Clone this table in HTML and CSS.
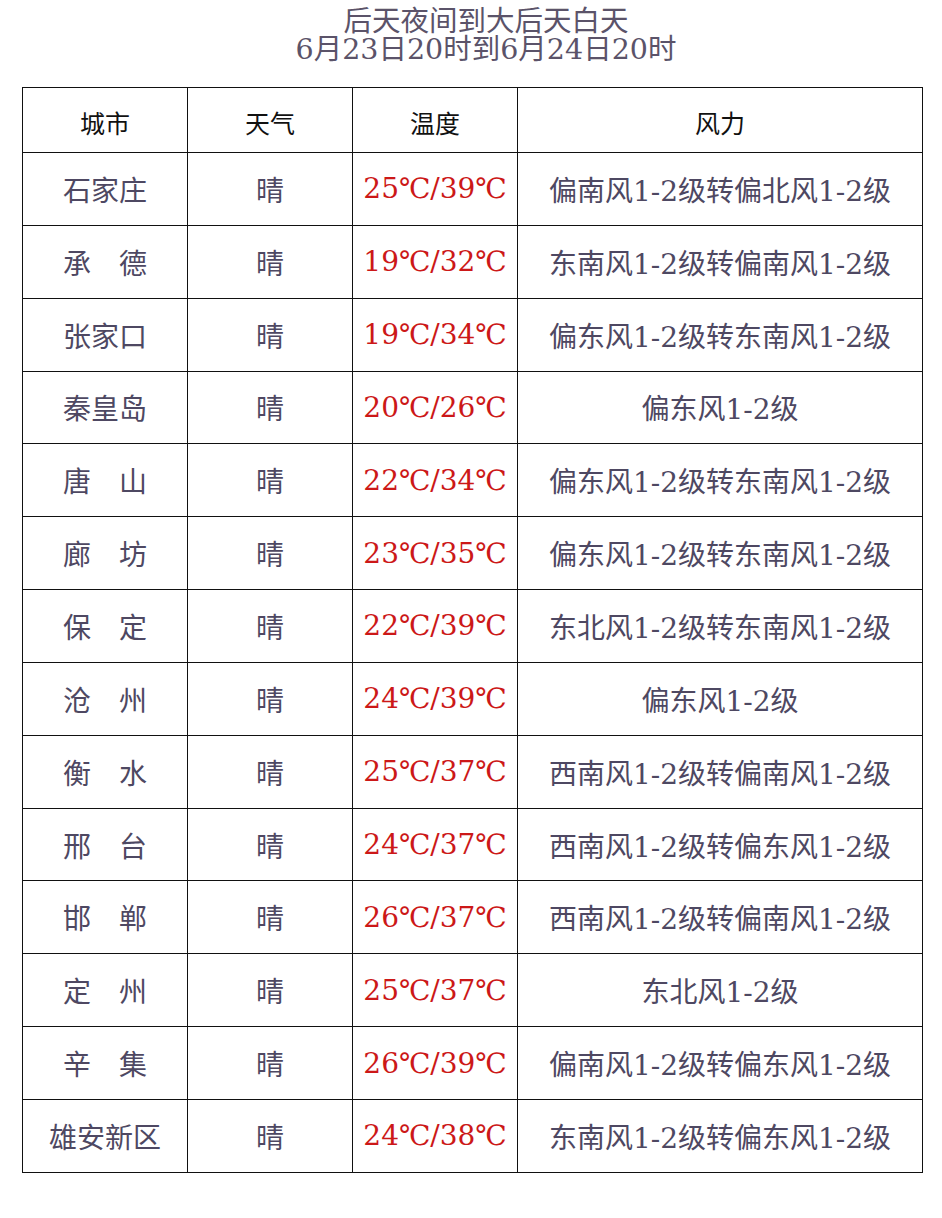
FILE: index.html
```html
<!DOCTYPE html>
<html lang="zh">
<head>
<meta charset="utf-8">
<title>后天夜间到大后天白天</title>
<link rel="stylesheet" href="styles.css">
</head>
<body>
<div class="page">
  <div class="title">
    <div>后天夜间到大后天白天</div>
    <div>6月23日20时到6月24日20时</div>
  </div>
  <table class="wx">
    <colgroup>
      <col class="c1"><col class="c2"><col class="c3"><col class="c4">
    </colgroup>
    <thead>
      <tr><th>城市</th><th>天气</th><th>温度</th><th>风力</th></tr>
    </thead>
    <tbody>
      <tr><td>石家庄</td><td>晴</td><td class="t">25℃/39℃</td><td>偏南风1-2级转偏北风1-2级</td></tr>
      <tr><td>承　德</td><td>晴</td><td class="t">19℃/32℃</td><td>东南风1-2级转偏南风1-2级</td></tr>
      <tr><td>张家口</td><td>晴</td><td class="t">19℃/34℃</td><td>偏东风1-2级转东南风1-2级</td></tr>
      <tr><td>秦皇岛</td><td>晴</td><td class="t">20℃/26℃</td><td>偏东风1-2级</td></tr>
      <tr><td>唐　山</td><td>晴</td><td class="t">22℃/34℃</td><td>偏东风1-2级转东南风1-2级</td></tr>
      <tr><td>廊　坊</td><td>晴</td><td class="t">23℃/35℃</td><td>偏东风1-2级转东南风1-2级</td></tr>
      <tr><td>保　定</td><td>晴</td><td class="t">22℃/39℃</td><td>东北风1-2级转东南风1-2级</td></tr>
      <tr><td>沧　州</td><td>晴</td><td class="t">24℃/39℃</td><td>偏东风1-2级</td></tr>
      <tr><td>衡　水</td><td>晴</td><td class="t">25℃/37℃</td><td>西南风1-2级转偏南风1-2级</td></tr>
      <tr><td>邢　台</td><td>晴</td><td class="t">24℃/37℃</td><td>西南风1-2级转偏东风1-2级</td></tr>
      <tr><td>邯　郸</td><td>晴</td><td class="t">26℃/37℃</td><td>西南风1-2级转偏南风1-2级</td></tr>
      <tr><td>定　州</td><td>晴</td><td class="t">25℃/37℃</td><td>东北风1-2级</td></tr>
      <tr><td>辛　集</td><td>晴</td><td class="t">26℃/39℃</td><td>偏南风1-2级转偏东风1-2级</td></tr>
      <tr><td>雄安新区</td><td>晴</td><td class="t">24℃/38℃</td><td>东南风1-2级转偏东风1-2级</td></tr>
    </tbody>
  </table>
</div>
</body>
</html>
```
FILE: styles.css
```css
html, body {
  margin: 0;
  padding: 0;
  background: #ffffff;
}
.page {
  padding: 7.5px 0 0 22px;
  font-family: "DejaVu Serif", "Noto Sans CJK SC", serif;
}
.title {
  width: 900px;
  padding-left: 28px;
  box-sizing: border-box;
  text-align: center;
  color: #5b5369;
  font-size: 28.5px;
  line-height: 28.5px;
  margin-bottom: 22.5px;
}
.wx {
  border-collapse: collapse;
  width: 900px;
  table-layout: fixed;
}
.c1, .c2, .c3 { width: 165px; }
.c4 { width: 405px; }
.wx th, .wx td {
  border: 1.5px solid #111;
  text-align: center;
  vertical-align: middle;
  padding: 0;
  white-space: nowrap;
}
.wx th {
  height: 60px;
  font-size: 25px;
  font-weight: normal;
  color: #111;
  padding-top: 4px;
}
.wx td {
  height: 71.85px;
  font-size: 28px;
  color: #4e4862;
}
.wx td.t {
  color: #cc1818;
}
```
